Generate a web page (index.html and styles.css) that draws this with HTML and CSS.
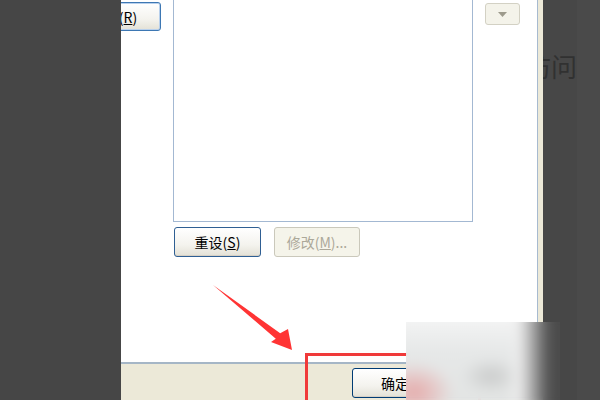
FILE: index.html
```html
<!DOCTYPE html>
<html lang="zh-CN">
  <head>
    <meta charset="UTF-8" />
    <meta name="viewport" content="width=device-width, initial-scale=1.0" />
    <title>设置</title>
    <link rel="stylesheet" href="styles.css">
  </head>
  <body>
    <div class="screen">
      <div class="side-left"></div>

      <div class="dialog">
        <div class="dialog-body">
          <div class="page">
            <div class="col-left">
              <button class="btn btn-focus">删除(<u>R</u>)</button>
            </div>
            <div class="col-mid">
              <div class="listbox"></div>
              <div class="btn-row">
                <button class="btn btn-reset">重设(<u>S</u>)</button>
                <button class="btn" disabled>修改(<u>M</u>)...</button>
              </div>
            </div>
            <div class="col-right">
              <button class="combo-btn">
                <svg width="9" height="5" viewBox="0 0 9 5"><path d="M0 0h9L4.5 5z" fill="#9d9a8c"/></svg>
              </button>
            </div>
          </div>
          <div class="frame-edge"></div>
        </div>
        <div class="dialog-foot">
          <button class="btn btn-ok">确定</button>
          <button class="btn">取消</button>
        </div>
      </div>

      <div class="side-right">
        <span class="bg-text">访问</span>
      </div>

      <!-- 标注：箭头和红框 -->
      <svg class="arrow" width="600" height="400" viewBox="0 0 600 400">
        <polygon points="213,285 280.2,333.2 288,329 292,350 271,342 275.8,338.8" fill="#ff3434"/>
      </svg>
      <div class="highlight"></div>
      <div class="watermark"><div class="watermark-blur"></div></div>
    </div>
  </body>
</html>
```

FILE: styles.css
```css
body {
  margin: 0;
  font-family: "Noto Sans CJK SC", "Liberation Sans", sans-serif;
}

.screen {
  position: relative;
  display: flex;
  width: 600px;
  height: 400px;
  overflow: hidden;
  background-color: #464646;
}

.side-left {
  width: 121px;
  flex-shrink: 0;
  background-color: #464646;
}

.dialog {
  width: 422px;
  flex-shrink: 0;
  display: flex;
  flex-direction: column;
  overflow: hidden;
  background-color: #ece9d8;
}

.dialog-body {
  display: flex;
  height: 362px;
}

.page {
  display: flex;
  width: 416px;
  background-color: white;
  border-right: 1px solid #a7bad0;
}

.frame-edge {
  flex: 1;
  background-color: #ece9d8;
}

.col-left {
  width: 52px;
  flex-shrink: 0;
}

.col-mid {
  width: 300px;
  flex-shrink: 0;
}

.col-right {
  padding: 3px 0 0 12px;
}

.btn {
  display: flex;
  align-items: center;
  justify-content: center;
  box-sizing: border-box;
  width: 86px;
  height: 30px;
  padding: 0;
  font-family: "Noto Sans CJK SC", sans-serif;
  font-size: 14px;
  color: #000;
  border: 1px solid #003c74;
  border-radius: 3px;
  background: linear-gradient(#ffffff, #f4f3ee 60%, #e3e1d6);
  box-shadow: inset 0 -1px 0 #d6d0c5;
}

.btn u {
  text-underline-offset: 1px;
}

.btn:disabled {
  color: #aca899;
  border-color: #cac8bb;
  background: #f5f4ea;
  box-shadow: none;
}

.btn-focus {
  width: 94px;
  margin: 2px 0 0 -54px;
  height: 29px;
  border-color: #3d77b3;
  box-shadow: inset 0 0 0 1px #b8d0ec;
}

.listbox {
  box-sizing: border-box;
  height: 232px;
  margin-top: -10px;
  border: 1px solid #a3b8d2;
  background-color: white;
}

.btn-row {
  display: flex;
  gap: 13px;
  margin: 5px 0 0 1px;
}

.btn-reset {
  width: 87px;
  border-color: #2f5f93;
}

.combo-btn {
  display: flex;
  align-items: center;
  justify-content: center;
  box-sizing: border-box;
  width: 35px;
  height: 22px;
  padding: 0;
  border: 1px solid #d3d1c4;
  border-radius: 3px;
  background-color: #f4f3ea;
}

.dialog-foot {
  display: flex;
  gap: 8px;
  flex: 1;
  padding: 4px 0 0 231px;
  border-top: 2px solid #a5b6c6;
}

.side-right {
  flex: 1;
  overflow: hidden;
  background: linear-gradient(to right, #474747 34px, #4a4a4a 34px);
}

.bg-text {
  display: block;
  margin: 51px 0 0 -18px;
  font-size: 26px;
  line-height: 30px;
  color: #313131;
  white-space: nowrap;
}

.arrow {
  position: absolute;
  top: 0;
  left: 0;
  pointer-events: none;
}

.highlight {
  position: absolute;
  left: 305px;
  top: 353px;
  width: 170px;
  height: 44px;
  border: 3px solid #f03a3a;
  pointer-events: none;
}

.watermark {
  position: absolute;
  left: 406px;
  top: 322px;
  width: 154px;
  height: 78px;
  overflow: hidden;
}

.watermark-blur {
  position: absolute;
  inset: -10px;
  filter: blur(6px);
  background:
    radial-gradient(ellipse 40px 30px at 18px 80px, rgba(232, 120, 120, 0.55), transparent),
    radial-gradient(ellipse 30px 18px at 95px 64px, rgba(150, 150, 150, 0.35), transparent),
    linear-gradient(#f6f6f6, #e6e8e8 40%, #e2e4e3),
    #e8e8e8;
}

.watermark-blur::after {
  content: "";
  position: absolute;
  top: 0;
  bottom: 0;
  right: 0;
  width: 60px;
  background: linear-gradient(to right, rgba(240, 240, 240, 0), #f0f0f0 15%, #a0a0a0 40%, #555 62%, #4a4a4a 80%);
}
```
